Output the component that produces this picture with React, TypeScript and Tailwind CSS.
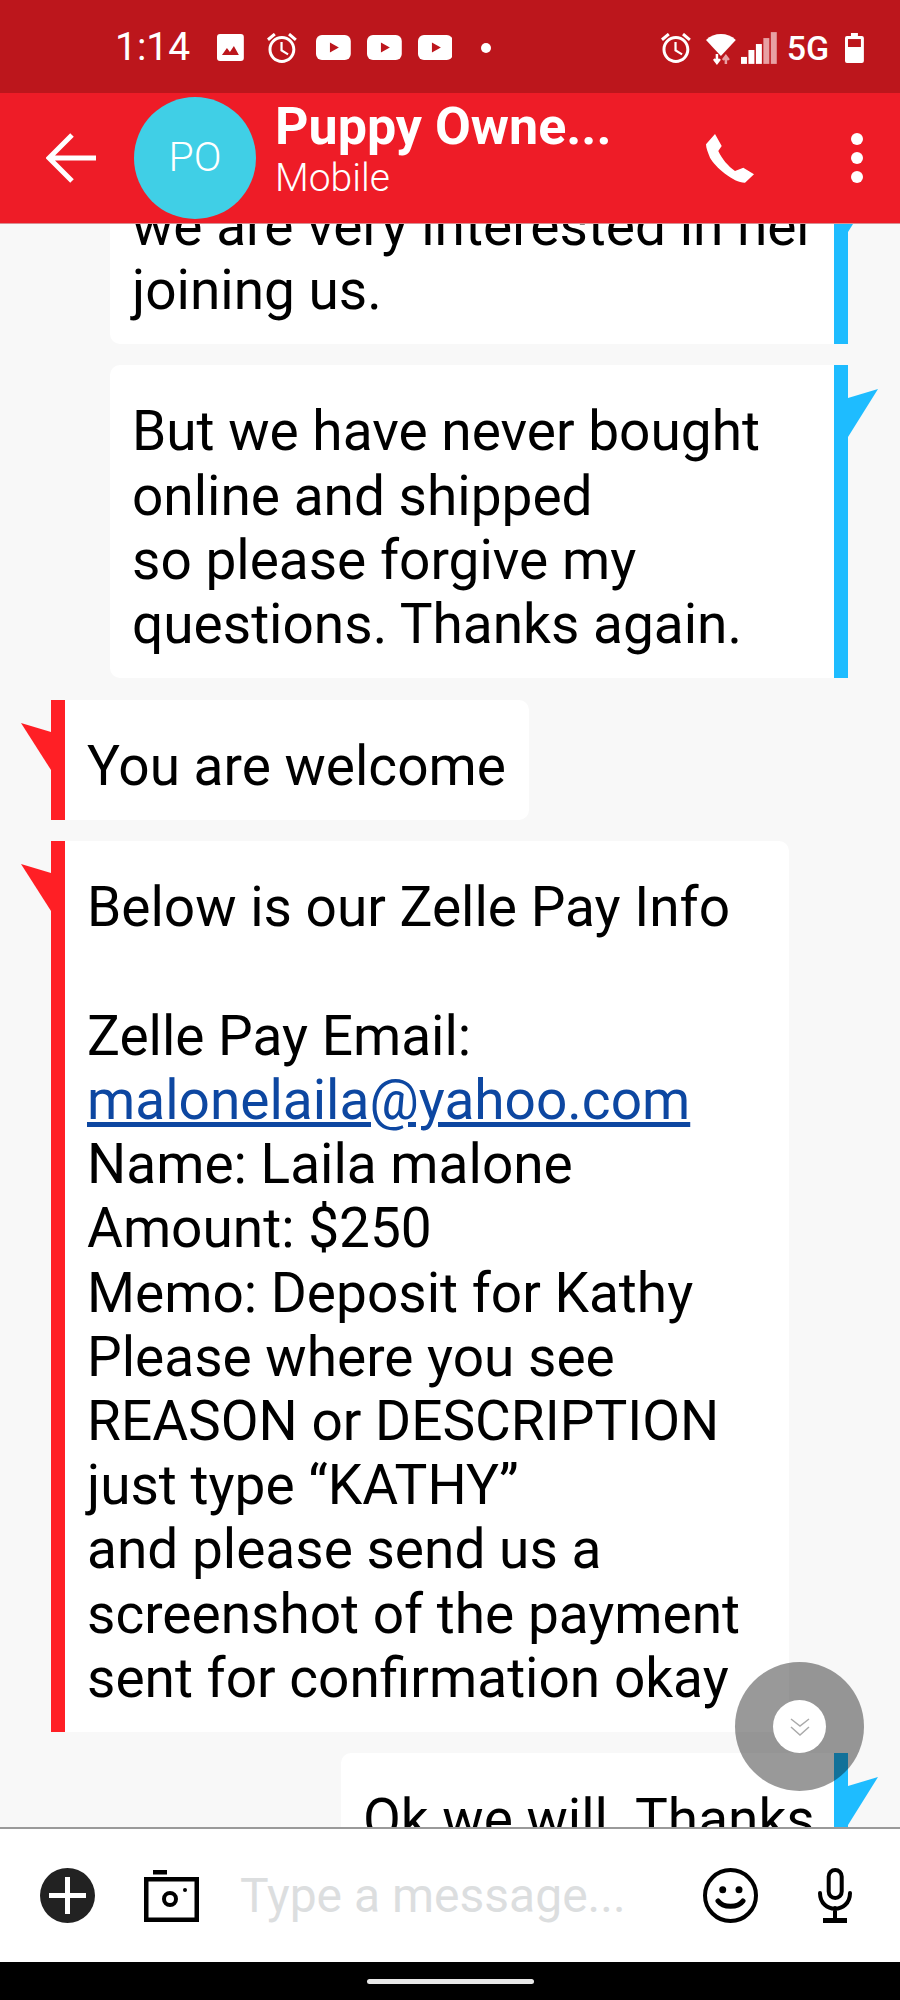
import React from 'react';

const alarmPath =
  'M22 5.72l-4.6-3.86-1.29 1.53 4.6 3.86L22 5.72zM7.88 3.39L6.6 1.86 2 5.71l1.29 1.53 4.59-3.85zM12.5 8H11v6l4.75 2.85.75-1.23-4-2.37V8zM12 4c-4.97 0-9 4.03-9 9s4.02 9 9 9c4.97 0 9-4.03 9-9s-4.03-9-9-9zm0 16c-3.87 0-7-3.13-7-7s3.13-7 7-7 7 3.13 7 7-3.13 7-7 7z';

function Alarm({ className }: { className: string }) {
  return (
    <svg viewBox="2 2 20 20" className={className} fill="#fff">
      <path d={alarmPath} />
    </svg>
  );
}

function YouTube({ className }: { className: string }) {
  return (
    <svg viewBox="0 0 35 25" className={className}>
      <rect width="35" height="25" rx="6" fill="#fff" />
      <path d="M14 7.5 L23 12.5 L14 17.5 Z" fill="#bc161c" />
    </svg>
  );
}

function StatusBar() {
  return (
    <div className="h-[93px] shrink-0 bg-[#bc161c] flex items-center pl-[115px] pr-[36px] pt-[2px] text-white">
      <span className="text-[39px] leading-none w-[103px]">1:14</span>
      <svg viewBox="0 0 27 27" className="w-[27px] h-[27px]">
        <rect width="27" height="27" rx="3" fill="#fff" />
        <path d="M5 21 L10 14 L13 18 L17 12 L22 21 Z" fill="#bc161c" />
      </svg>
      <Alarm className="w-[30px] h-[30px] ml-[23px]" />
      <YouTube className="w-[35px] h-[25px] ml-[19px]" />
      <YouTube className="w-[35px] h-[25px] ml-[16px]" />
      <YouTube className="w-[35px] h-[25px] ml-[16px]" />
      <span className="w-[10px] h-[10px] rounded-full bg-white ml-[29px]" />
      <Alarm className="w-[30px] h-[30px] ml-[170px]" />
      <svg viewBox="0 0 30 34" className="w-[30px] h-[34px] ml-[15px]">
        <path d="M0 9 C8 1 22 1 30 9 L15 25 Z" fill="#fff" />
        <path d="M11 23 V30 M8 28 L11 32 L14 28" stroke="#fff" strokeWidth="2.5" fill="none" />
        <path d="M20 33 V26 M17 29 L20 25 L23 29" stroke="#e8a0a3" strokeWidth="2.5" fill="none" />
      </svg>
      <svg viewBox="0 0 36 32" className="w-[36px] h-[32px] ml-[5px]">
        <rect x="0" y="25" width="6" height="7" fill="#fff" />
        <rect x="7.500" y="18" width="6" height="14" fill="#fff" />
        <rect x="15" y="12" width="6" height="20" fill="#fff" />
        <rect x="22.500" y="6" width="6" height="26" fill="#e8a0a3" />
        <rect x="30" y="0" width="6" height="32" fill="#e8a0a3" />
      </svg>
      <span className="text-[34px] leading-none font-medium ml-[10px]">5G</span>
      <svg viewBox="0 0 19 30" className="w-[19px] h-[30px] ml-[16px]">
        <path d="M6 0 H13 V3 H17 Q19 3 19 5 V28 Q19 30 17 30 H2 Q0 30 0 28 V5 Q0 3 2 3 H6 Z" fill="#fff" />
        <rect x="3" y="6" width="13" height="8" fill="#bc161c" />
      </svg>
    </div>
  );
}

function Header() {
  return (
    <div className="h-[131px] shrink-0 bg-[#ee1c27] border-b border-[#d98f93] flex items-center text-white relative z-10">
      <svg viewBox="0 0 50 50" className="w-[50px] h-[50px] ml-[46px] shrink-0" fill="none" stroke="#fff" strokeWidth="5">
        <path d="M50 25 H3 M26 2 L3 25 L26 48" />
      </svg>
      <div className="w-[122px] h-[122px] rounded-full bg-[#40cfe6] ml-[38px] shrink-0 flex items-center justify-center text-[41px] font-light">
        PO
      </div>
      <div className="ml-[19px] -mt-[16px] flex flex-col w-[421px] shrink-0">
        <span className="text-[52px] leading-[52px] font-bold">Puppy Owne...</span>
        <span className="text-[39px] leading-[44px] font-light mt-[3px]">Mobile</span>
      </div>
      <svg viewBox="0 0 49 49" className="w-[49px] h-[49px] ml-[10px] shrink-0" fill="#fff">
        <path d="M9 0 L15.700 12 L12.300 17 C16 25 22 32 29 37 L37.300 33.700 L48 40.300 L39 48.700 C28 49 9 33 4 23.700 C2 19 0 14 0 10.300 Z" />
      </svg>
      <div className="ml-[96px] flex flex-col gap-[7px]">
        <span className="w-[12px] h-[12px] rounded-full bg-white" />
        <span className="w-[12px] h-[12px] rounded-full bg-white" />
        <span className="w-[12px] h-[12px] rounded-full bg-white" />
      </div>
    </div>
  );
}

function Outgoing({ className, children }: { className: string; children: React.ReactNode }) {
  return (
    <div className={`self-end mr-[52px] relative flex shrink-0 ${className}`}>
      <div className="flex-1 bg-white rounded-l-[10px] pl-[22px] pr-[10px] pt-[34px] pb-[22px] whitespace-nowrap">{children}</div>
      <div className="w-[14px] shrink-0 bg-[#1ebcff]" />
      <svg viewBox="0 0 30 48" className="absolute left-full top-[24px] w-[30px] h-[48px]" fill="#1ebcff">
        <path d="M0 9 L30 0 L0 48 Z" />
      </svg>
    </div>
  );
}

function Incoming({ className, children }: { className: string; children: React.ReactNode }) {
  return (
    <div className={`self-start ml-[51px] relative flex shrink-0 ${className}`}>
      <div className="w-[14px] shrink-0 bg-[#ff1f25]" />
      <div className="flex-1 bg-white rounded-r-[10px] pl-[23px] pr-[10px] pt-[34px] pb-[22px] whitespace-nowrap">{children}</div>
      <svg viewBox="0 0 30 47" className="absolute right-full top-[23px] w-[30px] h-[47px]" fill="#ff1f25">
        <path d="M30 9 L0 0 L30 47 Z" />
      </svg>
    </div>
  );
}

function Messages() {
  return (
    <div className="flex-1 min-h-0 overflow-hidden relative bg-[#f8f8f8]">
      <div className="flex flex-col gap-[21px] text-[55px] leading-[64.2px] text-black">
        <Outgoing className="w-[738px] -mt-[64px]">
          <div>
            we are very interested in her
            <br />
            joining us.
          </div>
        </Outgoing>
        <Outgoing className="w-[738px]">
          <div>
            But we have never bought
            <br />
            online and shipped
            <br />
            so please forgive my
            <br />
            questions. Thanks again.
          </div>
        </Outgoing>
        <Incoming className="w-[478px] mt-[1px]">
          <div className="-ml-[1px]">You are welcome</div>
        </Incoming>
        <Incoming className="w-[738px]">
          <div className="-ml-[1px]">
            Below is our Zelle Pay Info
            <br />
            <br />
            Zelle Pay Email:
            <br />
            <span className="text-[#0d47a1] underline">malonelaila@yahoo.com</span>
            <br />
            Name: Laila malone
            <br />
            Amount: $250
            <br />
            Memo: Deposit for Kathy
            <br />
            Please where you see
            <br />
            REASON or DESCRIPTION
            <br />
            just type “KATHY”
            <br />
            and please send us a
            <br />
            screenshot of the payment
            <br />
            sent for confirmation okay
          </div>
        </Incoming>
        <Outgoing className="w-[507px]">
          <div>Ok we will. Thanks</div>
        </Outgoing>
      </div>
      <div className="absolute left-[735px] top-[1438px] w-[129px] h-[129px] rounded-full bg-black/40 flex items-center justify-center">
        <div className="w-[53px] h-[53px] rounded-full bg-white flex items-center justify-center">
          <svg viewBox="0 0 20 18" className="w-[20px] h-[18px]" fill="none" stroke="#aaa" strokeWidth="1.500">
            <path d="M1 1 L10 8 L19 1 M1 9 L10 17 L19 9" />
          </svg>
        </div>
      </div>
    </div>
  );
}

function InputBar() {
  return (
    <div className="h-[135px] shrink-0 bg-white border-t-2 border-[#9a9a9a] flex items-center">
      <svg viewBox="0 0 55 55" className="w-[55px] h-[55px] ml-[40px] shrink-0">
        <circle cx="27.500" cy="27.500" r="27.500" fill="#222" />
        <path d="M27.500 9 V46 M9 27.500 H46" stroke="#fff" strokeWidth="5" />
      </svg>
      <svg viewBox="0 0 55 52" className="w-[55px] h-[52px] ml-[49px] shrink-0" fill="none" stroke="#000">
        <rect x="9" y="0" width="14" height="4.500" fill="#000" stroke="none" />
        <rect x="2.250" y="9.250" width="50.500" height="40.500" strokeWidth="4.500" />
        <circle cx="26" cy="29" r="6" strokeWidth="4" />
        <circle cx="41" cy="20" r="2" fill="#000" stroke="none" />
      </svg>
      <span className="ml-[41px] w-[463px] shrink-0 text-[48px] leading-none text-[#dcdedf]">Type a message...</span>
      <svg viewBox="0 0 55 55" className="w-[55px] h-[55px] shrink-0" fill="none" stroke="#000" strokeWidth="4">
        <circle cx="27.500" cy="27.500" r="25.500" />
        <circle cx="19.700" cy="21.700" r="3.500" fill="#000" stroke="none" />
        <circle cx="36" cy="21.700" r="3.500" fill="#000" stroke="none" />
        <path d="M15 33 C20 40 35 40 40 33" strokeWidth="5" strokeLinecap="round" />
      </svg>
      <svg viewBox="0 0 35 55" className="w-[35px] h-[55px] ml-[60px] shrink-0" fill="none" stroke="#000" strokeWidth="4">
        <rect x="10.700" y="2" width="13" height="28" rx="6.500" />
        <path d="M2 25 C2 46 32 46 32 25 M17 40 V52" strokeLinecap="round" />
        <rect x="5" y="50" width="24" height="5" fill="#000" stroke="none" />
      </svg>
    </div>
  );
}

export default function App() {
  return (
    <div className="w-[900px] h-[2000px] flex flex-col overflow-hidden font-['Roboto',sans-serif]">
      <StatusBar />
      <Header />
      <Messages />
      <InputBar />
      <div className="h-[38px] shrink-0 bg-black flex items-center justify-center">
        <div className="w-[167px] h-[5px] rounded-full bg-[#e8e8e8]" />
      </div>
    </div>
  );
}
